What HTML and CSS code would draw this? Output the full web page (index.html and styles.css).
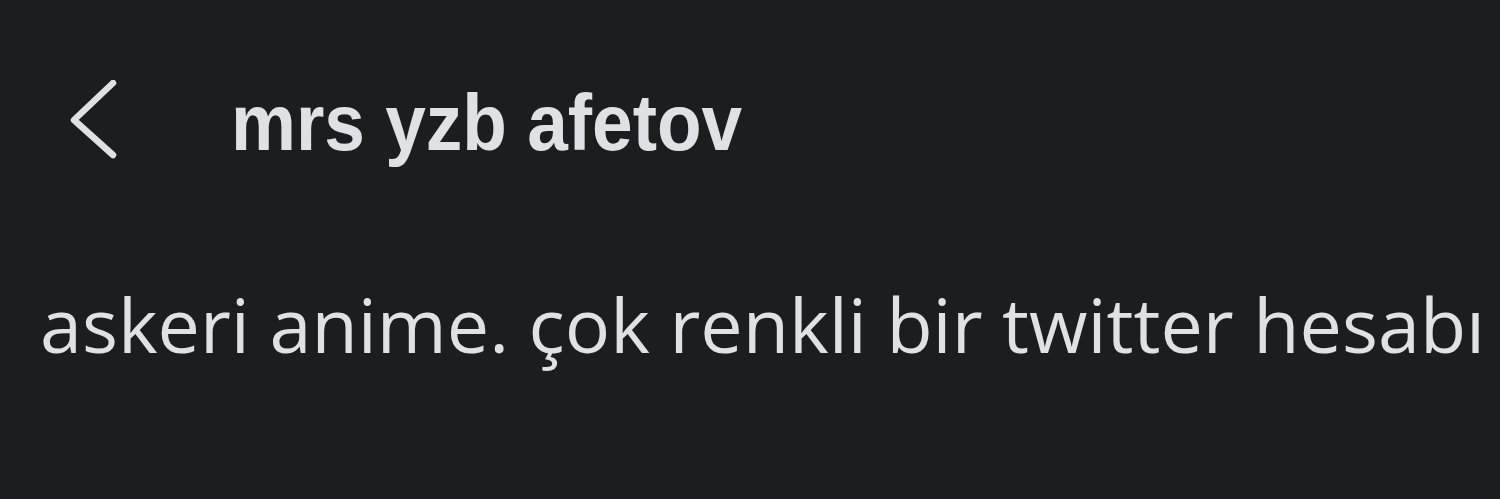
FILE: index.html
```html
<!DOCTYPE html>
<html lang="tr">
<head>
    <meta charset="UTF-8">
    <meta name="viewport" content="width=device-width, initial-scale=1.0">
    <title>mrs yzb afetov</title>
    <link rel="stylesheet" href="styles.css">
</head>
<body>
    <header class="topbar">
        <button class="back" aria-label="Geri">
            <svg viewBox="0 0 48 80" width="48" height="80">
                <polyline points="43,3 4,40 43,75" fill="none" stroke="currentColor" stroke-width="6.5" stroke-linecap="round" stroke-linejoin="round"/>
            </svg>
        </button>
        <h1 class="name">mrs yzb afetov</h1>
    </header>

    <p class="bio">askeri anime. çok renkli bir twitter hesabı</p>
</body>
</html>
```

FILE: styles.css
```css
body {
    margin: 0;
    padding: 0;
    background-color: #1c1d1f;
    color: #dfe1e5;
    font-family: Roboto, "Liberation Sans", sans-serif;
    height: 499px;
    overflow: hidden;
}
.topbar {
    display: flex;
    align-items: center;
    padding: 80px 0 0 70px;
    height: 80px;
}
.back {
    background: none;
    border: none;
    padding: 0;
    color: #dfe1e5;
    display: flex;
    width: 48px;
    height: 80px;
}
/* tall, tightly set bold title */
.name {
    margin: 8px 0 0 113px;
    font-family: "Liberation Sans", Arial, sans-serif;
    font-size: 73px;
    font-weight: 700;
    line-height: 1;
    transform: scaleY(1.1);
    transform-origin: 0 62px;
}
.bio {
    margin: 0;
    padding: 126px 0 0 40px;
    font-family: "Open Sans", sans-serif;
    font-weight: 400;
    font-size: 75.5px;
    line-height: 1;
    white-space: nowrap;
}
```
